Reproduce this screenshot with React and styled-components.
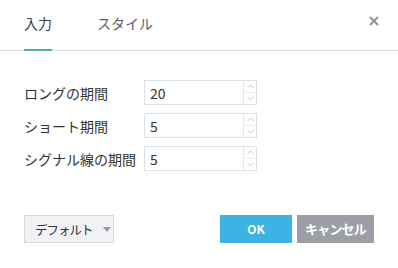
import React from 'react';
import styled, { createGlobalStyle } from 'styled-components';

const GlobalStyle = createGlobalStyle`
  body {
    margin: 0;
    background: #fff;
    font-family: "Noto Sans CJK JP", "Noto Sans", sans-serif;
  }
`;

const Dialog = styled.div`
  width: 398px;
  height: 268px;
  background: #fff;
  display: flex;
  flex-direction: column;
`;

const Header = styled.div`
  height: 51px;
  box-sizing: border-box;
  border-bottom: 1px solid #dcdcdc;
  display: flex;
  align-items: stretch;
  padding: 0 19px 0 24px;
`;

const Tab = styled.div`
  display: flex;
  align-items: center;
  padding-bottom: 3px;
  margin-right: 45px;
  margin-bottom: -1px;
  box-sizing: border-box;
  font-size: 14px;
  color: ${(p) => (p.active ? '#3a3f47' : '#5a606a')};
  border-bottom: 2px solid ${(p) => (p.active ? '#52b38a' : 'transparent')};
`;

const Close = styled.div`
  margin-left: auto;
  display: flex;
  align-items: flex-start;
  padding-top: 16px;
  cursor: pointer;
`;

const Body = styled.div`
  padding: 29px 0 0 24px;
  display: flex;
  flex-direction: column;
  gap: 8px;
`;

const Row = styled.div`
  display: flex;
  align-items: center;
  height: 25px;
`;

const Label = styled.span`
  width: 120px;
  font-size: 14px;
  color: #333;
  white-space: nowrap;
`;

const Field = styled.div`
  width: 113px;
  height: 25px;
  box-sizing: border-box;
  border: 1px solid #dcdfe3;
  display: flex;
`;

const Value = styled.div`
  flex: 1;
  padding-left: 5px;
  display: flex;
  align-items: center;
  font-size: 14px;
  color: #333;
`;

const Spinner = styled.div`
  width: 12px;
  border-left: 1px solid #e4e6e9;
  display: flex;
  flex-direction: column;
`;

const SpinHalf = styled.div`
  flex: 1;
  display: flex;
  align-items: center;
  justify-content: center;
  border-top: ${(p) => (p.down ? '1px solid #eceef0' : 'none')};
`;

const Footer = styled.div`
  margin-top: 44px;
  padding: 0 24px;
  display: flex;
  align-items: center;
`;

const DefaultButton = styled.div`
  width: 90px;
  height: 28px;
  box-sizing: border-box;
  border: 1px solid #d6d9de;
  background: #f1f2f6;
  display: flex;
  align-items: center;
  padding-left: 10px;
  gap: 10px;
  font-size: 12.5px;
  letter-spacing: -1px;
  white-space: nowrap;
  color: #333;
`;

const Caret = styled.span`
  width: 0;
  height: 0;
  border-left: 4px solid transparent;
  border-right: 4px solid transparent;
  border-top: 5px solid #999;
`;

const Actions = styled.div`
  margin-left: auto;
  display: flex;
  gap: 5px;
`;

const ActionButton = styled.div`
  width: ${(p) => p.w}px;
  height: 28px;
  display: flex;
  align-items: center;
  justify-content: center;
  background: ${(p) => p.bg};
  color: #fff;
  font-weight: bold;
  font-size: ${(p) => p.size}px;
  letter-spacing: ${(p) => p.ls || 0}px;
  white-space: nowrap;
  padding-bottom: 2px;
  box-sizing: border-box;
`;

const Chevron = ({ up }) => (
  <svg width="7" height="5" viewBox="0 0 7 5">
    <path
      d={up ? 'M0.5 4 L3.5 1 L6.5 4' : 'M0.5 1 L3.5 4 L6.5 1'}
      fill="none"
      stroke="#b9bdc3"
      strokeWidth="0.9"
    />
  </svg>
);

const fields = [
  { label: 'ロングの期間', value: '20' },
  { label: 'ショート期間', value: '5' },
  { label: 'シグナル線の期間', value: '5' },
];

const App = () => (
  <Dialog>
    <GlobalStyle />
    <Header>
      <Tab active>入力</Tab>
      <Tab>スタイル</Tab>
      <Close>
        <svg width="10" height="10" viewBox="0 0 10 10">
          <path d="M1 1 L9 9 M9 1 L1 9" stroke="#8b9099" strokeWidth="2" />
        </svg>
      </Close>
    </Header>

    <Body>
      {fields.map((f) => (
        <Row key={f.label}>
          <Label>{f.label}</Label>
          <Field>
            <Value>{f.value}</Value>
            <Spinner>
              <SpinHalf>
                <Chevron up />
              </SpinHalf>
              <SpinHalf down>
                <Chevron />
              </SpinHalf>
            </Spinner>
          </Field>
        </Row>
      ))}
    </Body>

    <Footer>
      <DefaultButton>
        デフォルト
        <Caret />
      </DefaultButton>
      <Actions>
        <ActionButton w={72} bg="#3db3e4" size={12}>OK</ActionButton>
        <ActionButton w={77} bg="#9d9fa6" size={13} ls={-0.8}>キャンセル</ActionButton>
      </Actions>
    </Footer>
  </Dialog>
);

export default App;
